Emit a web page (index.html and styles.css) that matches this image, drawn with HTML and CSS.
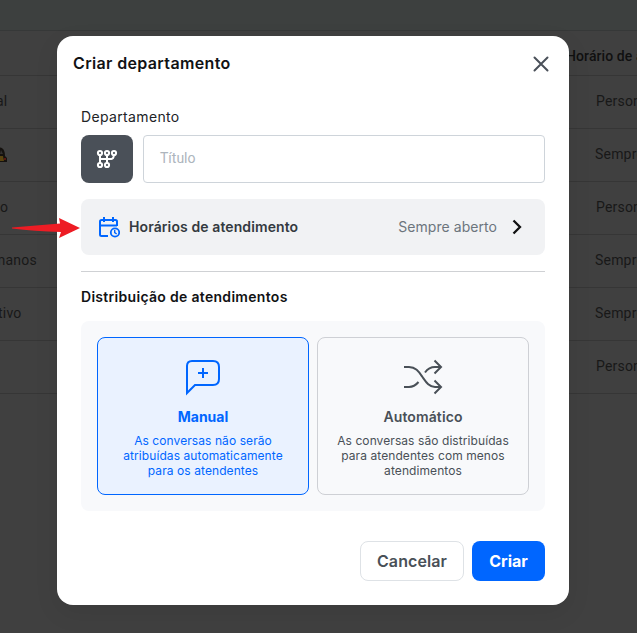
FILE: index.html
```html
<!DOCTYPE html>
<html lang="pt-BR">
<head>
<meta charset="utf-8">
<title>Criar departamento</title>
<link rel="stylesheet" href="styles.css">
</head>
<body>
<div class="page">
  <div class="topbar"></div>
  <div class="row head"><span></span><span class="col">Horário de a</span></div>
  <div class="row"><span class="cut-a">al</span><span class="col person">Person</span></div>
  <div class="row"><span><svg class="emoji" width="7" height="18" viewBox="0 0 7 18"><path d="M0 2.5C4 3 5 7 5 11l2 2v4H0z" fill="#15120f"/><path d="M0 11h3l1 5H0z" fill="#59430f"/><path d="M4 13h2v2H4z" fill="#5a1714"/><path d="M1 5l2 4H0" fill="#33312f"/></svg></span><span class="col">Sempre</span></div>
  <div class="row"><span>o</span><span class="col person">Person</span></div>
  <div class="row"><span class="cut">manos</span><span class="col">Sempre</span></div>
  <div class="row"><span class="cut-t">tivo</span><span class="col">Sempre</span></div>
  <div class="row"><span></span><span class="col person">Person</span></div>
</div>

<main class="modal">
  <header class="modal-head">
    <h1>Criar departamento</h1>
    <svg class="close" width="16" height="16" viewBox="0 0 16 16"><path d="M1.5 1.5l13 13M14.5 1.5l-13 13"/></svg>
  </header>
  <section class="body">
    <label class="label">Departamento</label>
    <div class="field">
      <div class="iconbox">
        <svg width="22" height="20" viewBox="0 0 22 20"><g fill="none" stroke="#fff" stroke-width="2"><circle cx="4" cy="4" r="2.1"/><circle cx="11" cy="4" r="2.1"/><circle cx="18" cy="4" r="2.1"/><circle cx="4" cy="16" r="2.1"/><circle cx="11" cy="16" r="2.1"/><path d="M4 6v8M11 6v8M4 10h11.500q2 0 2.500-4"/></g></svg>
      </div>
      <div class="input">Título</div>
    </div>
    <div class="hours">
      <svg width="22" height="22" viewBox="0 0 22 22"><g fill="none" stroke="#0066ff" stroke-width="2"><path d="M10 20H3.5Q2 20 2 18.500V5.500Q2 4 3.500 4H17.500Q19 4 19 5.500V10M2 9.500H19M6 1v5M15 1v5"/><circle cx="17" cy="16.500" r="4.200" stroke-width="1.800"/><path d="M16.700 14v2.700l2 1.300" stroke-width="1.400"/></g></svg>
      <strong>Horários de atendimento</strong>
      <span class="status">Sempre aberto</span>
      <svg class="chev" width="10" height="16" viewBox="0 0 10 16"><path d="M1.500 1.500L8 8l-6.500 6.500"/></svg>
    </div>
    <h2>Distribuição de atendimentos</h2>
    <div class="options">
      <div class="card selected">
        <svg width="40" height="40" viewBox="0 0 40 40"><path d="M4 36V9q0-5 5-5H30q6 0 6 6V22q0 6-6 6H12ZM20 11v10M15 16h10"/></svg>
        <h3>Manual</h3>
        <p>As conversas não serão<br>atribuídas automaticamente<br>para os atendentes</p>
      </div>
      <div class="card">
        <svg width="40" height="40" viewBox="0 0 40 40"><path d="M1 10h5c7 0 10 5 13.500 10S26 30 32 30h6M1 30h5c4.500 0 7-2 9.500-5M22 15.500C24.500 12 27 10 32 10h6M31.500 3.500L38 10l-6.500 6.500M31.500 23.500L38 30l-6.500 6.500"/></svg>
        <h3>Automático</h3>
        <p>As conversas são distribuídas<br>para atendentes com menos<br>atendimentos</p>
      </div>
    </div>
    <footer class="actions">
      <button class="cancel">Cancelar</button>
      <button class="create">Criar</button>
    </footer>
  </section>
</main>
<svg class="pointer" width="69" height="20" viewBox="0 0 69 20"><path d="M0 9.500L48 5.500L47 0L68 10L47 20L49 14Q22 13 0 10.500Z" fill="#ed1c24"/></svg>
</body>
</html>
```

FILE: styles.css
```css
* { box-sizing: border-box; }
body { margin: 0; width: 637px; height: 633px; overflow: hidden; background: #404040; font-family: Inter, sans-serif; position: relative; }
h1, h2, h3, p { margin: 0; }
svg { display: block; flex: none; }
.page { height: 633px; font: 14px Roboto, sans-serif; letter-spacing: .2px; color: #181818; overflow: hidden; }
.topbar { height: 31px; background: #3d403f; border-bottom: 1px solid #363838; }
.row { height: 53px; display: grid; grid-template-columns: 595px 1fr; align-items: center; border-bottom: 1px solid #363636; white-space: nowrap; padding-bottom: 2px; }
.row.head { height: 45px; grid-template-columns: 566px 1fr; font-weight: 500; color: #101010; padding: 5px 0 0; letter-spacing: .1px; }
.person { padding-left: 1px; }
.cut { margin-left: -7px; }
.cut-t { margin-left: -2px; }
.cut-a { margin-left: -4px; }
.emoji { margin-left: 0; }

/* dialog over the dimmed table */
.modal { position: absolute; left: 57px; top: 36px; width: 512px; height: 569px; background: #fff; border-radius: 16px; box-shadow: 0 8px 24px rgba(0,0,0,.08); }
.modal-head { height: 56px; padding: 0 20px 0 16px; display: flex; align-items: center; justify-content: space-between; }
h1 { font-size: 16px; font-weight: 600; line-height: 24px; letter-spacing: .35px; color: #111214; padding-bottom: 2px; }
.close { fill: none; stroke: #4a5059; stroke-width: 2; stroke-linecap: round; }
.body { padding: 15px 24px 0; }
.label { display: block; font-size: 14px; line-height: 20px; letter-spacing: .35px; color: #212326; }
.field { display: flex; gap: 10px; margin-top: 8px; }
.iconbox { width: 52px; height: 48px; border-radius: 8px; background: #4a5058; display: flex; align-items: center; justify-content: center; }
.input { flex: 1; height: 48px; border: 1px solid #ced4da; border-radius: 4px; padding: 0 16px 2px; display: flex; align-items: center; font: 14px Roboto, sans-serif; color: #adb5bd; }
.hours { height: 56px; margin-top: 16px; padding: 0 23px 0 17px; display: flex; align-items: center; background: #f1f2f4; border-radius: 8px; font-size: 14px; }
.hours strong { font-weight: 600; margin-left: 9px; padding-bottom: 2px; letter-spacing: .1px; color: #343a40; }
.status { margin-left: auto; margin-right: 15px; padding-bottom: 2px; letter-spacing: .06px; color: #6c757d; }
.chev { fill: none; stroke: #111; stroke-width: 2.3; }
h2 { font-size: 14px; font-weight: 600; line-height: 20px; letter-spacing: .3px; margin-top: 16px; padding-top: 15px; border-top: 1px solid #cfd1d4; color: #111214; }
.options { display: flex; gap: 8px; margin-top: 14px; padding: 16px; height: 190px; background: #f8f9fb; border-radius: 8px; }
.card { flex: 1; border: 1px solid #ced0d5; border-radius: 8px; padding-top: 19px; display: flex; flex-direction: column; align-items: center; text-align: center; color: #495057; }
.card svg { fill: none; stroke: currentColor; stroke-width: 2; }
.card h3 { font-size: 14px; font-weight: 600; line-height: 20px; margin-top: 10px; letter-spacing: .12px; }
.card p { font-size: 12px; line-height: 15px; margin-top: 6px; letter-spacing: .08px; white-space: nowrap; }
.card.selected { color: #0066ff; background: #eaf2ff; border-color: #0066ff; }
.card.selected h3 { font-weight: 700; letter-spacing: 0; }
.actions { display: flex; justify-content: flex-end; gap: 8px; margin-top: 30px; }
button { height: 40px; border-radius: 8px; font: 600 16px Inter, sans-serif; padding: 0; }
.cancel { width: 104px; border: 1px solid #dee2e6; background: #fff; color: #495057; letter-spacing: .1px; }
.create { width: 73px; border: 0; background: #0066ff; color: #fff; font-weight: 700; }

/* annotation arrow */
.pointer { position: absolute; left: 12px; top: 218px; }
```
